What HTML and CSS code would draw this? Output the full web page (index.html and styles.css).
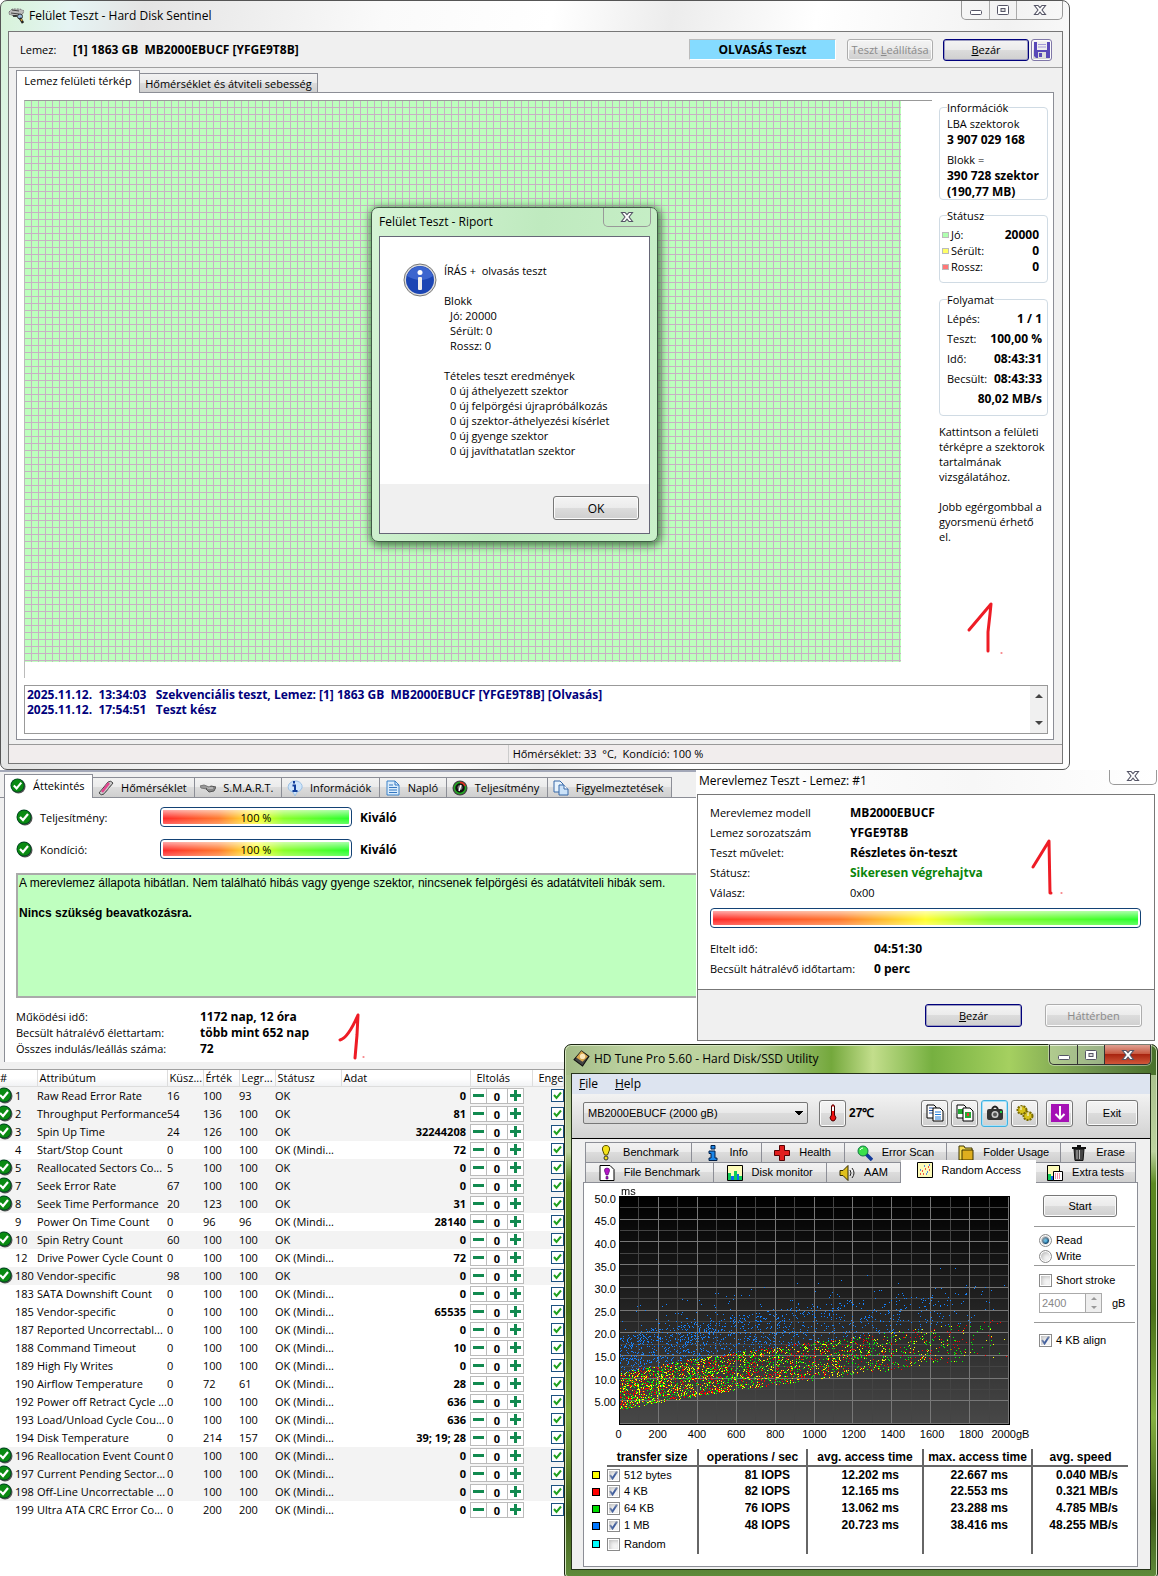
FILE: index.html
```html
<!DOCTYPE html>
<html lang="hu">
<head>
<meta charset="utf-8">
<meta name="viewport" content="width=device-width, initial-scale=1">
<title>Felület Teszt - Hard Disk Sentinel</title>
<link rel="stylesheet" href="styles.css">
</head>
<body>
<svg class="sprite" aria-hidden="true">
  <symbol id="ok" viewBox="0 0 17 17"><circle cx="9" cy="9" r="7.5" fill="#555"/><circle cx="8" cy="8" r="7.5" fill="#042"/><circle cx="8" cy="8" r="6.6" fill="#0a8a12"/><path d="M4 8l3 3 5-6" fill="none" stroke="#fff" stroke-width="2.2"/></symbol>
  <symbol id="close" viewBox="0 0 14 12"><path d="M1.500 1.500h3.500l2 2.200 2-2.200h3.500L9 6l3.500 4.500H9L7 8.200 5 10.500H1.500L5 6z" fill="#fff" stroke="#556" stroke-width="1.100"/></symbol>
  <symbol id="min" viewBox="0 0 14 12"><rect x="1.500" y="6.500" width="11" height="4" rx="1" fill="#fff" stroke="#556"/></symbol>
  <symbol id="max" viewBox="0 0 14 12"><rect x="1.500" y="1.500" width="11" height="9" rx="1" fill="#fff" stroke="#556"/><rect x="5" y="4.500" width="4" height="3" fill="#ddd" stroke="#556"/></symbol>
  <symbol id="drive" viewBox="0 0 17 17"><path d="M1 5l3-3h8l4 2-2 4-8 1-5-2z" fill="#bbb" stroke="#777" stroke-dasharray="2 1"/><path d="M4 3l7 1M3 6l8 1" stroke="#444"/><path d="M5 9h4" stroke="#111" stroke-width="1.500"/><circle cx="12" cy="9.500" r="2.500" fill="#9bd" stroke="#333"/><path d="M12 11l3 5" stroke="#222" stroke-width="2.500"/><path d="M13 12l1 2" stroke="#c93" stroke-width="1.500"/></symbol>
  <symbol id="pen" viewBox="0 0 16 16"><path d="M1 13L10 2q3-2 5 1L6 14q-3 2-5-1z" fill="#ccc" stroke="#444"/><path d="M4 12l7-9" stroke="#e2458f" stroke-width="2.500"/><path d="M6 14l8-10" stroke="#777"/></symbol>
  <symbol id="disks" viewBox="0 0 16 16"><path d="M0 6l4-1 5 2-2 2-6-1z" fill="#999" stroke="#777"/><path d="M6 9l5-3 5 1-2 4-5 1z" fill="#888" stroke="#555"/><path d="M7 8l6 0" stroke="#ddd"/></symbol>
  <symbol id="infob" viewBox="0 0 16 16"><path d="M2 4Q5 0 10 1q6 2 5 7-2 4-5 4l-2 4-2-4Q-1 10 2 4z" fill="#cfe6fb" stroke="#9cc0e4"/><path d="M5.500 5.500H8V11M5.500 11h5M7 1v2.500" stroke="#123f9c" stroke-width="2" fill="none"/></symbol>
  <symbol id="page" viewBox="0 0 16 16"><path d="M2 1h8l4 4v10H2z" fill="#d9ecfc" stroke="#3c82c8"/><path d="M10 1v4h4M4 5h4M4 7.500h8M4 10h8M4 12.500h8" stroke="#3577c0" fill="none"/></symbol>
  <symbol id="gauge" viewBox="0 0 16 16"><circle cx="8" cy="8" r="7.500" fill="#444"/><circle cx="8" cy="8" r="5.500" fill="#111" stroke="#2a2" stroke-width="1.500"/><path d="M8 2.500A5.500 5.500 0 0 1 13 6" fill="none" stroke="#e22" stroke-width="1.500"/><circle cx="8" cy="7.500" r="2.500" fill="#777"/><path d="M7 11l2-6" stroke="#fff" stroke-width="1.500"/></symbol>
  <symbol id="pages" viewBox="0 0 16 16"><path d="M1 1h6l3 3v8H1z" fill="#e8f3fd" stroke="#3668a8"/><path d="M6 5h5l4 4v6H6z" fill="#cbe2f8" stroke="#3668a8"/><path d="M11 5v4h4" fill="#fff" stroke="#3668a8"/></symbol>
  <symbol id="save" viewBox="0 0 16 16"><path d="M0 0h16v16H2l-2-2z" fill="#5848b8"/><path d="M3 0h10v8H3z" fill="#eee"/><path d="M4 2.500h8M4 5h8" stroke="#a39ad8"/><path d="M4 10h8v6H4z" fill="#ddd"/><path d="M5 11h3v4H5z" fill="#5848b8"/></symbol>
  <symbol id="bluei" viewBox="0 0 34 34"><circle cx="17" cy="17" r="16" fill="#ddd" stroke="#777"/><circle cx="17" cy="17" r="14" fill="#1b45b4"/><path d="M4 13a13.500 13.500 0 0 1 26 0q-12 8-26 0z" fill="#4a74d8" opacity=".7"/><circle cx="17" cy="9.500" r="2.500" fill="#fff"/><rect x="15" y="14" width="4" height="13" rx="1" fill="#eee"/></symbol>
  <symbol id="hdt" viewBox="0 0 16 16"><path d="M1 9L8 1l7 5-6 9z" fill="#444" stroke="#111"/><path d="M3 7l5-6 6 5-5 5z" fill="#d9a84e"/><circle cx="9" cy="6" r="2.500" fill="#fbe7bb"/></symbol>
  <symbol id="thermo" viewBox="0 0 16 18"><path d="M6.500 2q1.500-3 3 0v9q3 3 0 5.500-1.500 1-3 0-3-2.500 0-5.500z" fill="#e11" stroke="#400"/><path d="M7 2.500h2V7H7z" fill="#fff"/></symbol>
  <symbol id="copy" viewBox="0 0 18 18"><path d="M1 1h7l2 2v11H1z" fill="#fff" stroke="#000"/><path d="M3 4h4M3 6.500h4M3 9h4" stroke="#25a"/><path d="M7 4h7l3 3v10H7z" fill="#fff" stroke="#000"/><path d="M9 8h6M9 10.500h6M9 13h6M9 15h6" stroke="#1d79d8"/></symbol>
  <symbol id="copyimg" viewBox="0 0 18 18"><path d="M1 1h7l2 2v11H1z" fill="#fff" stroke="#000"/><path d="M2 5h5v5H2z" fill="#2a3"/><path d="M7 4h7l3 3v10H7z" fill="#fff" stroke="#000"/><path d="M9 8h6v6H9z" fill="#2a3"/><path d="M11 9h2v3h-2z" fill="#e33"/></symbol>
  <symbol id="cam" viewBox="0 0 18 18"><path d="M6 5q3-5 6 0" fill="none" stroke="#222" stroke-width="2"/><rect x="1" y="5" width="16" height="11" rx="2" fill="#333"/><circle cx="9" cy="10.500" r="3.500" fill="#ccc"/><circle cx="9" cy="10.500" r="2" fill="#555"/><path d="M14 7h2v2h-2z" fill="#2c4"/></symbol>
  <symbol id="gears" viewBox="0 0 18 18"><ellipse cx="6" cy="6" rx="4.500" ry="4" fill="#d8c21c" stroke="#7a6b00" stroke-width="2" stroke-dasharray="2 1"/><ellipse cx="12" cy="12" rx="4.500" ry="4" fill="#d8c21c" stroke="#7a6b00" stroke-width="2" stroke-dasharray="2 1"/><path d="M5 2v4M12 8v4" stroke="#fff"/></symbol>
  <symbol id="down" viewBox="0 0 18 18"><path d="M0 0h18v18H0z" fill="#a511b5"/><path d="M9 2v12M4.500 10L9 14.500 13.500 10" fill="none" stroke="#fff" stroke-width="2"/></symbol>
  <symbol id="bulb" viewBox="0 0 16 16"><path d="M8 .500q4 0 3.500 4.500L9.500 10h-3L4.500 5Q4 .500 8 .500z" fill="#f4e21a" stroke="#554c00"/><circle cx="8" cy="13" r="2" fill="#f4e21a" stroke="#333"/></symbol>
  <symbol id="iblue" viewBox="0 0 16 16"><path d="M6 .500h4v3.500H6zM4 6h6v7h2v2.500H4V13h2V8.500H4z" fill="#1a86e8" stroke="#001c44"/></symbol>
  <symbol id="cross" viewBox="0 0 16 16"><path d="M5.500.5h5v5h5v5h-5v5h-5v-5h-5v-5h5z" fill="#e11d1d" stroke="#500"/></symbol>
  <symbol id="lens" viewBox="0 0 16 16"><path d="M9 9l6 6" stroke="#123a9a" stroke-width="3.500"/><circle cx="6" cy="6" r="5" fill="#3be04c" stroke="#174"/><path d="M3 5q1-2 3-2" stroke="#fff" fill="none"/></symbol>
  <symbol id="folder" viewBox="0 0 16 16"><path d="M1 1h5l1 2h7v12H1z" fill="#f6dc52" stroke="#3d3200"/><path d="M4 5h11v10H4z" fill="#dfae1e" stroke="#3d3200"/></symbol>
  <symbol id="bin" viewBox="0 0 16 16"><path d="M1 3h14M6 1h4" stroke="#111" stroke-width="2"/><path d="M3 4h10l-1 11.500H4z" fill="#444" stroke="#111"/><path d="M6 5v9M8.500 5v9" stroke="#bbb"/></symbol>
  <symbol id="filebulb" viewBox="0 0 16 16"><path d="M1 .5h10l4 4v11H1z" fill="#fff" stroke="#000"/><path d="M8 3q3 0 2.500 3L9 10H7L5.500 6Q5 3 8 3zM7 11.500h2V14H7z" fill="#b315c5" stroke="#406" stroke-width=".6"/></symbol>
  <symbol id="bars" viewBox="0 0 16 16"><path d="M.5.5h15v15H.5z" fill="#fdfbb8" stroke="#000"/><path d="M1 8h3v7H1zM7 6h3v9H7z" fill="#1c5"/><path d="M4 11h3v4H4zM10 9h2v6h-2z" fill="#16e"/><path d="M12 11h3v4h-3z" fill="#1c5"/></symbol>
  <symbol id="speaker" viewBox="0 0 16 16"><path d="M1 5.500h3l5-5v15l-5-5H1z" fill="#e0c01c" stroke="#332a00"/><path d="M11 5q2 3 0 6M13 3q4 5 0 10" fill="none" stroke="#222"/></symbol>
  <symbol id="dots" viewBox="0 0 16 16"><path d="M.5.5h15v15H.5z" fill="#fdfbb8" stroke="#000"/><path d="M3 12h1M5 9h1M8 7h1M11 5h1M12 8h1M6 12h1" stroke="#e22" stroke-width="1.500"/><path d="M3 8h1M7 4h1M10 10h1M12 3h1M9 12h1" stroke="#26e" stroke-width="1.500"/></symbol>
  <symbol id="extra" viewBox="0 0 16 16"><path d="M.5.5h12v15H.5z" fill="#fdfbb8" stroke="#000"/><path d="M1 9h3v6H1z" fill="#1c5"/><path d="M4 11h2v4H4z" fill="#16e"/><path d="M6.500 6.500h9v9h-9z" fill="#fff" stroke="#000"/><path d="M8 9h6M8 11h6M8 13h6" stroke="#d25" stroke-dasharray="1 1"/></symbol>
</svg>

<main class="desktop">
  <section class="window surface">
    <header class="titlebar">
      <svg class="i17"><use href="#drive"/></svg>
      <span class="title">Felület Teszt - Hard Disk Sentinel</span>
      <div class="caption">
        <button aria-label="Kis méret"><svg><use href="#min"/></svg></button>
        <button aria-label="Teljes méret"><svg><use href="#max"/></svg></button>
        <button class="wide" aria-label="Bezárás"><svg><use href="#close"/></svg></button>
      </div>
    </header>
    <div class="client">
      <div class="topbar">
        <span class="disk-label">Lemez:</span>
        <b class="disk-name">[1] 1863 GB&nbsp; MB2000EBUCF [YFGE9T8B]</b>
        <b class="mode">OLVASÁS Teszt</b>
        <button class="btn w85" disabled>Teszt <u>L</u>eállítása</button>
        <button class="btn w85 default"><u>B</u>ezár</button>
        <button class="btn save" aria-label="Mentés"><svg><use href="#save"/></svg></button>
      </div>
      <nav class="tabs">
        <button class="tab active">Lemez felületi térkép</button>
        <button class="tab">Hőmérséklet és átviteli sebesség</button>
      </nav>
      <div class="panel">
        <div class="map-row">
          <div class="map-box"><div class="map"></div></div>
          <aside class="side">
            <fieldset class="group info">
              <legend>Információk</legend>
              <span>LBA szektorok</span><b>3 907 029 168</b>
              <span class="next">Blokk =</span><b>390 728 szektor</b><b>(190,77 MB)</b>
            </fieldset>
            <fieldset class="group status">
              <legend>Státusz</legend>
              <p><i class="good"></i>Jó:<b>20000</b></p>
              <p><i class="hurt"></i>Sérült:<b>0</b></p>
              <p><i class="bad"></i>Rossz:<b>0</b></p>
            </fieldset>
            <fieldset class="group progress">
              <legend>Folyamat</legend>
              <p>Lépés:<b>1 / 1</b></p>
              <p>Teszt:<b>100,00 %</b></p>
              <p>Idő:<b>08:43:31</b></p>
              <p>Becsült:<b>08:43:33</b></p>
              <p><b>80,02 MB/s</b></p>
            </fieldset>
            <p class="hint">Kattintson a felületi<br>térképre a szektorok<br>tartalmának<br>vizsgálatához.</p>
            <p class="hint">Jobb egérgombbal a<br>gyorsmenü érhető<br>el.</p>
            <svg class="mark mark-side" viewBox="0 0 40 56"><path d="M3 29L25 3l-1 10-2 18v19"/><path class="dot" d="M35 52h1"/></svg>
          </aside>
        </div>
        <div class="log">
          <div class="log-text">2025.11.12.&nbsp; 13:34:03 &nbsp; Szekvenciális teszt, Lemez: [1] 1863 GB&nbsp; MB2000EBUCF [YFGE9T8B] [Olvasás]<br>2025.11.12.&nbsp; 17:54:51 &nbsp; Teszt kész</div>
          <div class="scroll"><i class="up"></i><i class="dn"></i></div>
        </div>
      </div>
      <footer class="statusbar"><span>Hőmérséklet: 33&nbsp; °C,&nbsp; Kondíció: 100 %</span></footer>
    </div>

    <section class="report">
      <header class="titlebar">
        <span class="title">Felület Teszt - Riport</span>
        <div class="caption"><button class="wide" aria-label="Bezárás"><svg><use href="#close"/></svg></button></div>
      </header>
      <div class="report-body">
        <div class="message">
          <svg class="i34"><use href="#bluei"/></svg>
          <div>
            <p>ÍRÁS +&nbsp; olvasás teszt</p>
            <p>Blokk</p>
            <ul><li>Jó: 20000</li><li>Sérült: 0</li><li>Rossz: 0</li></ul>
            <p>Tételes teszt eredmények</p>
            <ul><li>0 új áthelyezett szektor</li><li>0 új felpörgési újrapróbálkozás</li><li>0 új szektor-áthelyezési kísérlet</li><li>0 új gyenge szektor</li><li>0 új javíthatatlan szektor</li></ul>
          </div>
        </div>
        <footer><button class="btn">OK</button></footer>
      </div>
    </section>
  </section>

  <section class="overview">
    <nav class="tabs">
      <button class="tab active"><svg><use href="#ok"/></svg>Áttekintés</button>
      <button class="tab"><svg><use href="#pen"/></svg>Hőmérséklet</button>
      <button class="tab"><svg><use href="#disks"/></svg>S.M.A.R.T.</button>
      <button class="tab"><svg><use href="#infob"/></svg>Információk</button>
      <button class="tab"><svg><use href="#page"/></svg>Napló</button>
      <button class="tab"><svg><use href="#gauge"/></svg>Teljesítmény</button>
      <button class="tab"><svg><use href="#pages"/></svg>Figyelmeztetések</button>
    </nav>
    <div class="overview-body">
      <div class="health"><svg class="i17"><use href="#ok"/></svg><span>Teljesítmény:</span><div class="bar">100 %</div><b>Kiváló</b></div>
      <div class="health"><svg class="i17"><use href="#ok"/></svg><span>Kondíció:</span><div class="bar">100 %</div><b>Kiváló</b></div>
      <div class="verdict"><p>A merevlemez állapota hibátlan. Nem található hibás vagy gyenge szektor, nincsenek felpörgési és adatátviteli hibák sem.</p><p><b>Nincs szükség beavatkozásra.</b></p></div>
      <dl class="life">
        <dt>Működési idő:</dt><dd>1172 nap, 12 óra</dd>
        <dt>Becsült hátralévő élettartam:</dt><dd>több mint 652 nap</dd>
        <dt>Összes indulás/leállás száma:</dt><dd>72</dd>
      </dl>
      <svg class="mark mark-life" viewBox="0 0 32 52"><path d="M3 28q8-2 18-25l-1 20-2 23"/><path class="dot" d="M26 45h1"/></svg>
    </div>
  </section>

  <section class="selftest">
    <header class="titlebar">
      <span class="title">Merevlemez Teszt - Lemez: #1</span>
      <div class="caption"><button class="wide" aria-label="Bezárás"><svg><use href="#close"/></svg></button></div>
    </header>
    <div class="selftest-body">
      <div class="selftest-main">
        <dl>
          <dt>Merevlemez modell</dt><dd>MB2000EBUCF</dd>
          <dt>Lemez sorozatszám</dt><dd>YFGE9T8B</dd>
          <dt>Teszt művelet:</dt><dd>Részletes ön-teszt</dd>
          <dt>Státusz:</dt><dd class="success">Sikeresen végrehajtva</dd>
          <dt>Válasz:</dt><dd class="plain">0x00</dd>
        </dl>
        <div class="bar"></div>
        <dl class="times">
          <dt>Eltelt idő:</dt><dd>04:51:30</dd>
          <dt>Becsült hátralévő időtartam:</dt><dd>0 perc</dd>
        </dl>
        <svg class="mark mark-test" viewBox="0 0 36 60"><path d="M3 29L19 3l1 52h1"/><path class="dot" d="M31 55h1"/></svg>
      </div>
      <footer><button class="btn default"><u>B</u>ezár</button><button class="btn" disabled>Háttérben</button></footer>
    </div>
  </section>

  <section class="attributes">
    <table>
      <colgroup><col class="c-id"><col class="c-name"><col class="c-num"><col class="c-num"><col class="c-num"><col class="c-stat"><col class="c-data"><col class="c-off"><col></colgroup>
      <thead><tr><th class="hash">#</th><th>Attribútum</th><th>Küsz...</th><th>Érték</th><th>Legr...</th><th>Státusz</th><th>Adat</th><th class="off">Eltolás</th><th class="off">Enge</th></tr></thead>
      <tbody id="rows"></tbody>
    </table>
  </section>

  <section class="hdtune">
    <header class="titlebar">
      <svg class="i17"><use href="#hdt"/></svg>
      <span class="title">HD Tune Pro 5.60 - Hard Disk/SSD Utility</span>
      <div class="caption">
        <button aria-label="Minimize"><svg><use href="#min"/></svg></button>
        <button aria-label="Maximize"><svg><use href="#max"/></svg></button>
        <button class="wide quit" aria-label="Close"><svg><use href="#close"/></svg></button>
      </div>
    </header>
    <div class="hd-client">
      <nav class="menu"><button><u>F</u>ile</button><button><u>H</u>elp</button></nav>
      <div class="toolbar">
        <select class="drive" aria-label="Drive"><option>MB2000EBUCF (2000 gB)</option></select>
        <button class="btn tool" aria-label="Temperature"><svg><use href="#thermo"/></svg></button>
        <b class="temp">27℃</b>
        <button class="btn tool" aria-label="Copy text"><svg><use href="#copy"/></svg></button>
        <button class="btn tool" aria-label="Copy image"><svg><use href="#copyimg"/></svg></button>
        <button class="btn tool hot" aria-label="Screenshot"><svg><use href="#cam"/></svg></button>
        <button class="btn tool" aria-label="Options"><svg><use href="#gears"/></svg></button>
        <button class="btn tool update" aria-label="Update"><svg><use href="#down"/></svg></button>
        <button class="btn exit">Exit</button>
      </div>
      <div class="hd-main">
        <nav class="hd-tabs first">
          <button><svg><use href="#bulb"/></svg>Benchmark</button>
          <button><svg><use href="#iblue"/></svg>Info</button>
          <button><svg><use href="#cross"/></svg>Health</button>
          <button><svg><use href="#lens"/></svg>Error Scan</button>
          <button><svg><use href="#folder"/></svg>Folder Usage</button>
          <button><svg><use href="#bin"/></svg>Erase</button>
        </nav>
        <nav class="hd-tabs second">
          <button><svg><use href="#filebulb"/></svg>File Benchmark</button>
          <button><svg><use href="#bars"/></svg>Disk monitor</button>
          <button><svg><use href="#speaker"/></svg>AAM</button>
          <button class="active"><svg><use href="#dots"/></svg>Random Access</button>
          <button><svg><use href="#extra"/></svg>Extra tests</button>
        </nav>
        <div class="hd-panel">
          <div class="chart-row">
            <ol class="y-axis"><li>50.0</li><li>45.0</li><li>40.0</li><li>35.0</li><li>30.0</li><li>25.0</li><li>20.0</li><li>15.0</li><li>10.0</li><li>5.00</li></ol>
            <div class="plot">
              <span class="unit">ms</span>
              <canvas id="scatter"></canvas>
              <ol class="x-axis"><li>0</li><li>200</li><li>400</li><li>600</li><li>800</li><li>1000</li><li>1200</li><li>1400</li><li>1600</li><li>1800</li><li>2000gB</li></ol>
            </div>
            <form class="options">
              <button type="button" class="btn start">Start</button>
              <div class="set radios">
                <label><input type="radio" name="op" checked>Read</label>
                <label><input type="radio" name="op">Write</label>
              </div>
              <div class="set stroke">
                <label><input type="checkbox">Short stroke</label>
                <div class="spin"><input type="text" value="2400" aria-label="Short stroke gB" disabled><span class="arrows"><i class="up"></i><i class="dn"></i></span><span>gB</span></div>
              </div>
              <div class="set align"><label><input type="checkbox" checked>4 KB align</label></div>
            </form>
          </div>
          <table class="results">
            <colgroup><col class="r0"><col class="r1"><col class="r2"><col class="r3"><col class="r2"><col></colgroup>
            <thead><tr><td></td><th>transfer size</th><th>operations / sec</th><th>avg. access time</th><th>max. access time</th><th>avg. speed</th></tr></thead>
            <tbody>
              <tr><td><i class="sw yellow"></i></td><td><label><input type="checkbox" checked>512 bytes</label></td><td>81 IOPS</td><td>12.202 ms</td><td>22.667 ms</td><td>0.040 MB/s</td></tr>
              <tr><td><i class="sw red"></i></td><td><label><input type="checkbox" checked>4 KB</label></td><td>82 IOPS</td><td>12.165 ms</td><td>22.553 ms</td><td>0.321 MB/s</td></tr>
              <tr><td><i class="sw green"></i></td><td><label><input type="checkbox" checked>64 KB</label></td><td>76 IOPS</td><td>13.062 ms</td><td>23.288 ms</td><td>4.785 MB/s</td></tr>
              <tr><td><i class="sw blue"></i></td><td><label><input type="checkbox" checked>1 MB</label></td><td>48 IOPS</td><td>20.723 ms</td><td>38.416 ms</td><td>48.255 MB/s</td></tr>
              <tr class="last"><td><i class="sw cyan"></i></td><td><label><input type="checkbox">Random</label></td><td></td><td></td><td></td><td></td></tr>
            </tbody>
          </table>
        </div>
      </div>
    </div>
  </section>
</main>
<script src="app.js"></script>
</body>
</html>
```
FILE: styles.css
```css
* { box-sizing: border-box; }
html { background: #fff; }
body { margin: 0; font: 11px/15px "Open Sans", "Noto Sans", sans-serif; color: #000; }
button, input, select { font: inherit; color: inherit; margin: 0; }
button { padding: 0; border: 0; background: none; display: inline-flex; align-items: center; justify-content: center; white-space: pre; }
p, ul, ol, dl, dd { margin: 0; padding: 0; }
ul, ol { list-style: none; }
b, dd { font-weight: 700; font-size: 12px; }
svg { display: block; flex: none; }
.sprite { position: absolute; width: 0; height: 0; }
.i17 { width: 17px; height: 17px; }
.i34 { width: 34px; height: 34px; }

.desktop { display: grid; grid-template-columns: minmax(0, 564fr) minmax(0, 132fr) minmax(0, 374fr) minmax(0, 88fr); grid-template-rows: auto 274px 25px auto; overflow: hidden; }
.surface { grid-area: 1 / 1 / 2 / 4; }
.overview { grid-area: 2 / 1 / 4 / 3; }
.selftest { grid-area: 2 / 3 / 3 / 5; }
.attributes { grid-area: 4 / 1 / 5 / 2; }
.hdtune { grid-area: 3 / 2 / 5 / 5; z-index: 1; }

.titlebar { display: flex; align-items: center; height: 30px; padding-bottom: 2px; gap: 4px; }
.title { font-size: 12px; white-space: nowrap; }
.caption { margin-left: auto; align-self: flex-start; display: flex; border: 1px solid #999; border-top: 0; border-radius: 0 0 5px 5px; }
.caption button { width: 27px; height: 18px; }
.caption button + button { border-left: 1px solid #aaa; }
.caption .wide { width: 46px; }
.caption svg { width: 14px; height: 12px; }

.btn { height: 22px; border: 1px solid #777; border-radius: 3px; background: linear-gradient(#f4f4f4, #ebebeb 49%, #dcdcdc 50%, #cfcfcf); box-shadow: inset 0 0 0 1px #fbfbfb; font-size: 12px; }
.btn:disabled { color: #8a8a8a; border-color: #adadad; }
.btn.default { border-color: #00007b; box-shadow: inset 0 0 0 1px #9a9ac0; }
.btn.w85 { width: 86px; font-size: 11px; }

.surface { position: relative; border: 1px solid #555; border-radius: 7px 8px 7px 7px; padding: 0 6px 5px 7px; background: linear-gradient(100deg, #d6f3d8, #e6f4f4 6%, #e4e4e4 12%, #fafafa 32%, #fff 46%, #ececec 56%, #fff 68%, #f2f2f2 84%, #fff 95%); }
.client { border: 1px solid #777; background: #f0f0f0; }
.topbar { display: flex; align-items: center; height: 36px; padding: 0 10px 0 11px; border-bottom: 1px solid #a0a0a0; }
.disk-label { width: 53px; }
.mode { margin-left: auto; width: 147px; height: 21px; line-height: 19px; text-align: center; background: #85dbff; border: 1px solid; border-color: #bbb #fff #fff #bbb; margin-right: 11px; }
.topbar .default { margin: 0 2px 0 10px; }
.save { width: 21px; border-color: #8078a8; }
.save svg { width: 16px; height: 16px; }

.tabs { position: relative; display: flex; align-items: flex-end; }
.tab { height: 20px; border: 1px solid #8c8e96; border-left: 0; background: linear-gradient(#f2f2f2, #ebebeb 49%, #dcdcdc 50%, #cfcfcf); }
.tab.active { height: 23px; background: #fff; border-left: 1px solid #8c8e96; border-bottom: 0; padding-bottom: 3px; }
.surface .tabs { height: 25px; padding-left: 7px; }
.surface .tab { width: 178px; }
.surface .tab.active { width: 124px; }
.panel { margin: -1px 8px 4px 7px; border: 1px solid #8c8e96; background: #fff; padding: 7px 5px 5px 7px; }
.map-row { display: flex; gap: 7px; height: 578px; margin-bottom: 7px; }
.map-box { flex: 1; border-top: 1px solid #999; border-left: 1px solid #bbb; }
.map { max-width: 876px; margin-right: 31px; height: 561px; background: repeating-linear-gradient(90deg, transparent 0 6px, #c8b0c4 6px 7px), repeating-linear-gradient(#bdffbd 0 6px, #c8b0c4 6px 7px); }
.side { width: 109px; font-size: 11px; }
.group { border: 1px solid #d0dbe4; border-radius: 4px; margin: 0 0 8px; padding: 0 5px 0 7px; min-width: 0; }
.group legend { padding: 0; height: 15px; line-height: 15px; margin: 0; }
.info { height: 100px; padding-top: 1px; }
.info span, .info b { display: block; line-height: 16px; white-space: nowrap; }
.info .next { margin-top: 4px; }
.status { height: 75px; padding: 4px 8px 0 2px; margin-bottom: 9px; }
.status legend { margin-left: 5px; }
.group p { display: flex; align-items: center; line-height: 16px; white-space: nowrap; }
.group p b { margin-left: auto; }
.status i { width: 7px; height: 6px; border: 1px solid #bbb; margin-right: 2px; }
.good { background: #afffaf; } .hurt { background: #ff6; } .bad { background: #f77; }
.progress { height: 124px; padding-top: 2px; }
.progress p { line-height: 20px; }
.hint { margin-bottom: 15px; white-space: nowrap; }
.mark { fill: none; stroke: #ee1c25; stroke-width: 3; stroke-linecap: round; stroke-linejoin: round; }
.dot { stroke-width: 1; }
.mark-side { width: 40px; height: 56px; margin: 57px 0 0 27px; }
.log { display: flex; height: 49px; border: 1px solid #999; }
.log-text { flex: 1; padding: 1px 2px; font-weight: 700; font-size: 12px; color: #00007b; }
.scroll { width: 17px; background: #f0f0f0; display: flex; flex-direction: column; justify-content: space-between; align-items: center; padding: 8px 0; }
.up, .dn { border: 4px solid transparent; width: 0; height: 0; }
.up { border-top: 0; border-bottom-color: #444; }
.dn { border-bottom: 0; border-top-color: #444; }
.statusbar { height: 19px; border-top: 1px solid #999; background: #f1eded; display: flex; justify-content: center; line-height: 18px; }
.statusbar span { border-left: 1px solid #ccc; padding-left: 4px; margin-left: 140px; }

.report { position: absolute; left: 370px; top: 206px; width: 287px; border: 1px solid #3f5a45; border-radius: 7px; padding: 0 7px 7px; background: linear-gradient(100deg, #d5f3d5, #bfeabf 50%, #c9f0c9); box-shadow: 1px 2px 8px 2px #4a7a4a; }
.report .titlebar { height: 28px; }
.report .caption { margin-right: -1px; }
.report-body { border: 1px solid #667; background: #fff; }
.message { display: flex; gap: 7px; padding: 26px 0 0 23px; height: 247px; }
.message p + p, .message ul + p { margin-top: 15px; }
.message ul { padding-left: 6px; }
.report footer { background: #f0f0f0; height: 49px; padding: 12px 10px; display: flex; justify-content: flex-end; }
.report .btn { width: 86px; height: 24px; }

.overview { background: #f0f0f0; border-top: 2px solid #a3a8b8; }
.overview .tabs { height: 26px; border-bottom: 1px solid #8c8e96; padding: 0 24px 0 4px; }
.overview .tab { flex: 1 0 auto; justify-content: flex-start; gap: 7px; padding: 0 4px 0 5px; border-bottom: 0; }
.overview .tab.active { margin-bottom: -1px; height: 24px; padding-bottom: 2px; }
.overview .tab svg { width: 16px; height: 16px; }
.overview-body { position: relative; margin-left: 4px; border-left: 1px solid #8c8e96; background: #fff; height: 264px; padding: 3px 0 0 11px; }
.health { display: flex; align-items: center; height: 32px; }
.health span { width: 127px; padding-left: 7px; }
.health b { margin-left: 8px; }
.bar { height: 20px; border: 1px solid #134275; border-radius: 4px; padding: 2px; line-height: 15px; text-align: center; background: linear-gradient(#fff9, #fff0 60%, #fff4) content-box, linear-gradient(90deg, #ff2a2a, #ff7a2e 30%, #ffff2e 50%, #8aff2a 65%, #2aff2e) content-box, #fff; }
.health .bar { width: 192px; }
.verdict { margin-top: 8px; height: 125px; border: 2px solid #aaa; border-right: 0; background: #bfffbf; font: 12px/15px "Liberation Sans", Arial, sans-serif; padding: 1px; white-space: nowrap; overflow: hidden; }
.verdict p + p { margin-top: 15px; }
.life { display: grid; grid-template-columns: 184px auto; line-height: 16px; margin-top: 11px; }
.mark-life { position: absolute; left: 332px; top: 214px; width: 32px; height: 52px; }

.selftest { display: flex; flex-direction: column; height: 271px; background: linear-gradient(90deg, #fff, #f7f7f7 60%, #fff); }
.selftest .titlebar { height: 24px; padding: 0 3px 4px; }
.selftest .caption { height: 15px; margin-right: -2px; }
.selftest .caption button { height: 12px; }
.selftest-body { flex: 1; border: 1px solid #777; margin: 0 3px 0 1px; display: flex; flex-direction: column; background: #fff; }
.selftest-main { position: relative; flex: 1; padding: 8px 13px 0 12px; }
.selftest dl { display: grid; grid-template-columns: 140px auto; line-height: 20px; }
.selftest .times { grid-template-columns: 164px auto; }
.selftest .bar { margin: 5px 0 11px; }
.success { color: #0a850a; } .plain { font-weight: 400; font-size: 11px; }
.mark-test { position: absolute; left: 332px; top: 43px; width: 36px; height: 60px; }
.selftest footer { height: 51px; background: #f0f0f0; border-top: 1px solid #777; display: flex; justify-content: flex-end; gap: 23px; padding: 14px 12px; }
.selftest .btn { width: 97px; height: 23px; font-size: 11px; }

.attributes { overflow: hidden; border-top: 1px solid #a0a0a0; }
table { border-collapse: collapse; table-layout: fixed; width: 100%; }
.attributes th { height: 16px; padding: 0 0 0 2px; font-weight: 400; text-align: left; border-right: 1px solid #ddd; background: linear-gradient(#fff 50%, #f1f2f4); border-bottom: 1px solid #ddd; }
.attributes .hash { padding: 0; }
.attributes .off { padding-left: 6px; }
.attributes td { height: 18px; padding: 0; line-height: 16px; white-space: nowrap; }
.c-id { width: 37px; } .c-name { width: 130px; } .c-num { width: 36px; } .c-stat { width: 66px; } .c-data { width: 129px; } .c-off { width: 62px; }
.attributes .flag { background: #f3f3f3; }
.id { display: flex; align-items: center; height: 18px; padding-left: 15px; }
.id svg { width: 17px; height: 17px; margin-left: -19px; margin-right: 2px; }
.attributes .data { text-align: right; padding-right: 4px; }
.attributes b { font-size: 11px; }
.step { display: flex; width: 54px; height: 16px; border: 1px solid #bbb; background: #fff; }
.step button { width: 15px; }
.step svg { width: 11px; height: 11px; }
.step b { flex: 1; border: 1px solid #bbb; border-width: 0 1px; text-align: center; line-height: 15px; }

input[type=checkbox], input[type=radio] { appearance: none; width: 13px; height: 13px; border: 1px solid #8a8a8a; background: #f4f4f4 center/11px no-repeat; flex: none; box-shadow: inset 0 0 0 1px #fff, inset 2px 2px 4px #bbb; }
input[type=checkbox]:checked { background-image: url("data:image/svg+xml,%3Csvg xmlns='http://www.w3.org/2000/svg' viewBox='0 0 11 11'%3E%3Cpath d='M2 5l2.500 3.500L9 1.500' fill='none' stroke='%2338589c' stroke-width='2'/%3E%3C/svg%3E"); }
input[type=radio] { border-radius: 50%; }
input[type=radio]:checked { background: radial-gradient(circle, #4cb4e4 0 1px, #12476e 3px, #eee 4px); }
.attributes input[type=checkbox] { display: block; margin-left: 19px; border-color: #1c5180; background-color: #fff; box-shadow: none; background-image: url("data:image/svg+xml,%3Csvg xmlns='http://www.w3.org/2000/svg' viewBox='0 0 11 11'%3E%3Cpath d='M2 5l2.500 3L9 2.500' fill='none' stroke='%2321a121' stroke-width='2'/%3E%3C/svg%3E"); }

.hdtune { border: 1px solid #1d2714; border-radius: 7px 7px 4px 4px; padding: 0 6px 7px; font-family: "Liberation Sans", Arial, sans-serif; background: linear-gradient(90deg, #a3bb86, #c0d5a4 12%, #b9cf9a 32%, #74a83c 45%, #c3de8c 52%, #76b040 62%, #a5d060 75%, #6b8f4c 90%, #48702a) top/100% 30px no-repeat, linear-gradient(#a3bb86 0, #bdd39f 20%, #5d8a22 26%, #4a7018 50%, #86b141 70%, #3e5c16 88%, #5f8a3a); box-shadow: inset 0 0 0 1px #d5e5c0; }
.hdtune .titlebar { height: 28px; padding-left: 2px; font-family: "Open Sans", sans-serif; }
.hdtune .caption { border-color: #333; box-shadow: 0 0 0 1px #ffffff66; background: #ffffff55; }
.hdtune .caption button { height: 19px; border-color: #333; }
.hdtune .quit { background: linear-gradient(#e0a092, #c6543c 49%, #a92410 50%, #d0583a); border-radius: 0 0 4px 0; }
.hd-client { border: 1px solid #26331a; background: #f0f0f0; padding-bottom: 2px; }
.menu { height: 20px; display: flex; padding-left: 7px; gap: 17px; background: #dde4f0; font: 12px/20px "Open Sans", sans-serif; }
.toolbar { height: 45px; display: flex; align-items: center; padding: 0 12px 6px 11px; background: linear-gradient(#f2f2f2, #d2d2d2); border-bottom: 1px solid #000; gap: 3px; }
.drive { appearance: none; flex: 0 1 225px; height: 22px; border: 1px solid #777; border-radius: 2px; padding: 0 4px; margin-right: 8px; background: linear-gradient(to bottom right, #000 50%, transparent 51%) right 4px center/4px 5px no-repeat, linear-gradient(to bottom left, #000 50%, transparent 51%) right 8px center/4px 5px no-repeat, linear-gradient(#f4f4f4, #e8e8e8 50%, #dcdcdc 51%, #d4d4d4); }
.tool { width: 27px; height: 27px; flex: none; }
.tool svg { width: 18px; height: 18px; }
.hot { border-color: #3fb1e0; box-shadow: inset 0 0 0 1px #a8e2fa; }
.temp { margin-right: auto; }
.update { margin-left: 5px; }
.exit { width: 52px; height: 26px; margin-left: 10px; font-size: 11px; }
.hd-main { padding: 3px 12px 0 11px; }
.hd-tabs { display: grid; padding: 0 2px; }
.hd-tabs.first { grid-template-columns: 107fr 70fr 83fr 103fr 114fr 75fr; }
.hd-tabs.second { grid-template-columns: 129fr 113fr 75fr 135fr 100fr; }
.hd-tabs button { height: 20px; gap: 9px; border: 1px solid #8c8e96; border-bottom: 0; border-left-width: 0; background: linear-gradient(#f2f2f2, #ebebeb 49%, #dcdcdc 50%, #cfcfcf); }
.hd-tabs button:first-child { border-left-width: 1px; }
.hd-tabs .active { background: #fff; border: 0; margin: -2px 0 -1px; height: 23px; padding-bottom: 3px; z-index: 1; }
.hd-tabs svg { width: 16px; height: 16px; }
.hd-panel { border: 1px solid #8c8e96; background: #fff; height: 385px; }
.chart-row { display: flex; }
.y-axis { width: 35px; height: 226px; margin-top: 5px; display: flex; flex-direction: column; text-align: right; padding-right: 3px; }
.y-axis li { flex: 1; display: flex; align-items: center; justify-content: flex-end; }
.plot { position: relative; flex: 1; min-width: 0; padding-top: 13px; }
.plot canvas { display: block; width: 100%; height: 229px; }
.unit { position: absolute; left: 2px; top: 1px; }
.x-axis { display: grid; grid-template-columns: repeat(11, minmax(0, 1fr)); margin: 2px -20px 0; text-align: center; }
.x-axis li { display: flex; justify-content: center; }
.options { width: 103px; margin-left: 24px; padding-top: 12px; }
.start { display: flex; width: 74px; margin-left: 9px; font-size: 11px; }
.set { border-top: 1px solid #999; padding-left: 5px; margin-right: 2px; }
.set label { display: flex; align-items: center; gap: 4px; height: 16px; }
.radios { margin-top: 9px; padding-top: 5px; height: 39px; }
.stroke { padding-top: 6px; height: 57px; }
.spin { display: flex; align-items: center; margin-top: 4px; height: 22px; }
.spin input { width: 46px; height: 20px; border: 1px solid #aaa; border-right: 0; background: #fff; color: #888; padding: 0 2px; }
.arrows { width: 17px; height: 20px; border: 1px solid #aaa; background: #eee; display: flex; flex-direction: column; justify-content: space-around; align-items: center; margin-right: 10px; }
.arrows i { border-width: 3px; opacity: .5; }
.arrows .up { border-top: 0; } .arrows .dn { border-bottom: 0; }
.align { padding-top: 9px; }
.results { margin: 7px 0 0 6px; width: calc(100% - 15px); }
.r0 { width: 17px; } .r1 { width: 91px; } .r2 { width: 109px; } .r3 { width: 116px; }
.results th, .results td { padding: 0; height: 17px; line-height: 13px; border-right: 2px solid #666; }
.results tr > :first-child, .results tr > :last-child { border-right: 0; }
.results th { font-weight: 700; font-size: 12px; height: 17px; border-bottom: 2px solid #666; white-space: nowrap; }
.results tbody td:nth-child(n+3) { text-align: right; font-weight: 700; font-size: 12px; padding-right: 16px; }
.results tbody td:last-child { padding-right: 10px; }
.results tbody td:nth-child(4), .results tbody td:nth-child(5) { padding-right: 23px; }
.results label { display: flex; align-items: center; gap: 4px; }
.results .last td { height: 20px; }
.sw { display: block; width: 8px; height: 8px; border: 1px solid #000; margin-left: 2px; }
.yellow { background: #ff0; } .red { background: #f00; } .green { background: #0d0; } .blue { background: #07f; } .cyan { background: #0ff; }
```
FILE: app.js
```js
const M = 'OK (Mindi...';
const attributes = [
  [1, 'Raw Read Error Rate', 16, 100, 93, 'OK', '0', 1],
  [2, 'Throughput Performance', 54, 136, 100, 'OK', '81', 1],
  [3, 'Spin Up Time', 24, 126, 100, 'OK', '32244208', 1],
  [4, 'Start/Stop Count', 0, 100, 100, M, '72', 0],
  [5, 'Reallocated Sectors Co...', 5, 100, 100, 'OK', '0', 1],
  [7, 'Seek Error Rate', 67, 100, 100, 'OK', '0', 1],
  [8, 'Seek Time Performance', 20, 123, 100, 'OK', '31', 1],
  [9, 'Power On Time Count', 0, 96, 96, M, '28140', 0],
  [10, 'Spin Retry Count', 60, 100, 100, 'OK', '0', 1],
  [12, 'Drive Power Cycle Count', 0, 100, 100, M, '72', 0],
  [180, 'Vendor-specific', 98, 100, 100, 'OK', '0', 1],
  [183, 'SATA Downshift Count', 0, 100, 100, M, '0', 0],
  [185, 'Vendor-specific', 0, 100, 100, M, '65535', 0],
  [187, 'Reported Uncorrectabl...', 0, 100, 100, M, '0', 0],
  [188, 'Command Timeout', 0, 100, 100, M, '10', 0],
  [189, 'High Fly Writes', 0, 100, 100, M, '0', 0],
  [190, 'Airflow Temperature', 0, 72, 61, M, '28', 0],
  [192, 'Power off Retract Cycle ...', 0, 100, 100, M, '636', 0],
  [193, 'Load/Unload Cycle Cou...', 0, 100, 100, M, '636', 0],
  [194, 'Disk Temperature', 0, 214, 157, M, '39; 19; 28', 0],
  [196, 'Reallocation Event Count', 0, 100, 100, M, '0', 1],
  [197, 'Current Pending Sector...', 0, 100, 100, M, '0', 1],
  [198, 'Off-Line Uncorrectable ...', 0, 100, 100, M, '0', 1],
  [199, 'Ultra ATA CRC Error Co...', 0, 200, 200, M, '0', 0],
];
const minus = '<svg viewBox="0 0 11 11"><path d="M0 5.500h11" stroke="#128a50" stroke-width="3"/></svg>';
const plus = '<svg viewBox="0 0 11 11"><path d="M0 5.500h11M5.500 0v11" stroke="#128a50" stroke-width="3"/></svg>';
document.getElementById('rows').innerHTML = attributes.map(([id, name, limit, value, worst, status, data, flag]) => `
  <tr class="${flag ? 'flag' : ''}"><td><div class="id">${flag ? '<svg><use href="#ok"/></svg>' : ''}${id}</div></td>
  <td>${name}</td><td>${limit}</td><td>${value}</td><td>${worst}</td><td>${status}</td><td class="data"><b>${data}</b></td>
  <td><div class="step"><button aria-label="-">${minus}</button><b>0</b><button aria-label="+">${plus}</button></div></td>
  <td><input type="checkbox" aria-label="${name}" checked></td></tr>`).join('');

// Access time (ms) against position (gB), one colour per transfer size.
const canvas = document.getElementById('scatter');
const w = canvas.width = canvas.clientWidth;
const h = canvas.height = canvas.clientHeight;
const ctx = canvas.getContext('2d');
const shade = ctx.createLinearGradient(0, 0, 0, h);
shade.addColorStop(0, '#000');
shade.addColorStop(1, '#484848');
ctx.fillStyle = shade;
ctx.fillRect(0, 0, w, h);
for (const odd of [1, 0]) {
  ctx.fillStyle = odd ? '#444' : '#777';
  for (let i = odd; i <= 20; i += 2) {
    ctx.fillRect(Math.round(i * (w - 2) / 20), 0, 1, h);
    ctx.fillRect(0, Math.round(i * (h - 2) / 20), w, 1);
  }
}
ctx.strokeRect(0.5, 0.5, w - 1, h - 1);
let seed = 7;
const rnd = () => (seed = (seed * 16807) % 2147483647) / 2147483647;
const plot = (color, count, extra) => {
  ctx.fillStyle = color;
  for (let i = 0; i < count; i++) {
    const x = 1 - Math.sqrt(rnd());
    let ms = 3 + 12 * Math.pow(x, 0.8) + 8.3 * rnd() + extra;
    if (extra) ms += rnd() < 0.15 ? 7 * rnd() : 0;
    ctx.fillRect(1 + Math.floor(x * (w - 4)), Math.round(h - ms / 50 * h), 1, 1);
  }
};
plot('#1482ff', 1300, 8);
for (let i = 0; i < 8; i++) {
  plot('#ff0', 130, 0);
  plot('#f00', 130, 0);
  plot('#0f0', 130, 0);
}
```
